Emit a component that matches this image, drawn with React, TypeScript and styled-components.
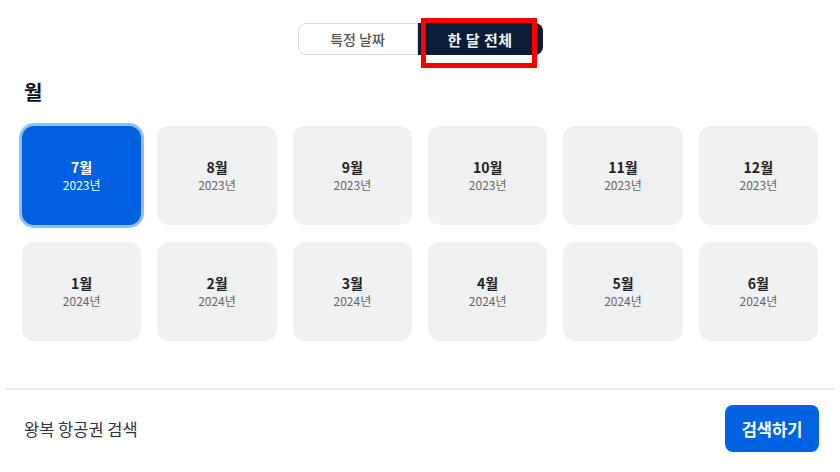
import React, { useState } from 'react';
import styled, { createGlobalStyle } from 'styled-components';

interface MonthItem {
  month: number;
  year: number;
}

const months: MonthItem[] = [
  { month: 7, year: 2023 },
  { month: 8, year: 2023 },
  { month: 9, year: 2023 },
  { month: 10, year: 2023 },
  { month: 11, year: 2023 },
  { month: 12, year: 2023 },
  { month: 1, year: 2024 },
  { month: 2, year: 2024 },
  { month: 3, year: 2024 },
  { month: 4, year: 2024 },
  { month: 5, year: 2024 },
  { month: 6, year: 2024 },
];

const App: React.FC = () => {
  const [selected, setSelected] = useState(0);
  const [mode, setMode] = useState<'date' | 'month'>('month');

  return (
    <>
      <GlobalStyle />
      <Page>
        <ToggleRow>
          <Toggle>
            <Segment active={mode === 'date'} side="left" onClick={() => setMode('date')}>
              특정 날짜
            </Segment>
            <Segment active={mode === 'month'} side="right" onClick={() => setMode('month')}>
              한 달 전체
            </Segment>
            <Highlight />
          </Toggle>
        </ToggleRow>

        <Heading>월</Heading>

        <MonthGrid>
          {months.map((m, i) => (
            <MonthCard key={i} selected={selected === i} onClick={() => setSelected(i)}>
              <MonthLabel>{m.month}월</MonthLabel>
              <YearLabel>{m.year}년</YearLabel>
            </MonthCard>
          ))}
        </MonthGrid>

        <Divider />

        <Footer>
          <FooterText>왕복 항공권 검색</FooterText>
          <SearchButton>검색하기</SearchButton>
        </Footer>
      </Page>
    </>
  );
};

// Styled Components

const GlobalStyle = createGlobalStyle`
  html, body {
    margin: 0;
    padding: 0;
    background: #fff;
  }
  body {
    font-family: "Noto Sans CJK KR", "Noto Sans", sans-serif;
    color: #222;
  }
  * {
    box-sizing: border-box;
  }
`;

const Page = styled.div`
  width: 840px;
  height: 472px;
  display: flex;
  flex-direction: column;
`;

const ToggleRow = styled.div`
  display: flex;
  justify-content: center;
  margin-top: 23px;
`;

const Toggle = styled.div`
  position: relative;
  display: flex;
  height: 32px;
`;

const Segment = styled.button<{ active: boolean; side: 'left' | 'right' }>`
  width: ${(p) => (p.side === 'left' ? '120px' : '125px')};
  height: 100%;
  display: flex;
  align-items: center;
  justify-content: center;
  font-family: inherit;
  font-size: ${(p) => (p.active ? '15px' : '14px')};
  font-weight: ${(p) => (p.active ? 700 : 500)};
  letter-spacing: ${(p) => (p.active ? '0.5px' : '0')};
  cursor: pointer;
  padding: 0;
  border-radius: ${(p) => (p.side === 'left' ? '8px 0 0 8px' : '0 8px 8px 0')};
  background: ${(p) => (p.active ? '#0b1d36' : '#fff')};
  color: ${(p) => (p.active ? '#f2f4f7' : '#555')};
  border: ${(p) => (p.active ? 'none' : '1.5px solid #dcdcdc')};
`;

const Highlight = styled.div`
  position: absolute;
  left: 123px;
  top: -5px;
  width: 116px;
  height: 50px;
  border: 5px solid #ff0000;
  pointer-events: none;
`;

const Heading = styled.h2`
  margin: 25px 0 0 24px;
  font-size: 20px;
  line-height: 24px;
  font-weight: 700;
  color: #111;
`;

const MonthGrid = styled.div`
  display: grid;
  grid-template-columns: repeat(6, 1fr);
  column-gap: 16px;
  row-gap: 17px;
  margin: 22px 22px 0;
`;

const MonthCard = styled.div<{ selected: boolean }>`
  height: 99px;
  border-radius: 12px;
  display: flex;
  flex-direction: column;
  align-items: center;
  justify-content: center;
  gap: 1px;
  cursor: pointer;
  background: ${(p) => (p.selected ? '#0061e0' : '#f0f1f2')};
  color: ${(p) => (p.selected ? '#fff' : '#222')};
  box-shadow: ${(p) => (p.selected ? '0 0 0 3px #90bff6' : 'none')};

  & > span:last-child {
    color: ${(p) => (p.selected ? '#fff' : '#666')};
  }
`;

const MonthLabel = styled.span`
  font-size: 14px;
  line-height: 18px;
  font-weight: 700;
`;

const YearLabel = styled.span`
  font-size: 12px;
  line-height: 16px;
  font-weight: 400;
`;

const Divider = styled.div`
  height: 2px;
  background: #ededed;
  margin: 47px 5px 0;
`;

const Footer = styled.div`
  display: flex;
  align-items: center;
  justify-content: space-between;
  padding: 15px 21px 0 24px;
`;

const FooterText = styled.span`
  font-size: 16.5px;
  color: #333;
`;

const SearchButton = styled.button`
  width: 94px;
  height: 47px;
  border: none;
  border-radius: 8px;
  background: #0063e1;
  color: #fff;
  font-family: inherit;
  font-size: 16.5px;
  font-weight: 700;
  cursor: pointer;
`;

export default App;
